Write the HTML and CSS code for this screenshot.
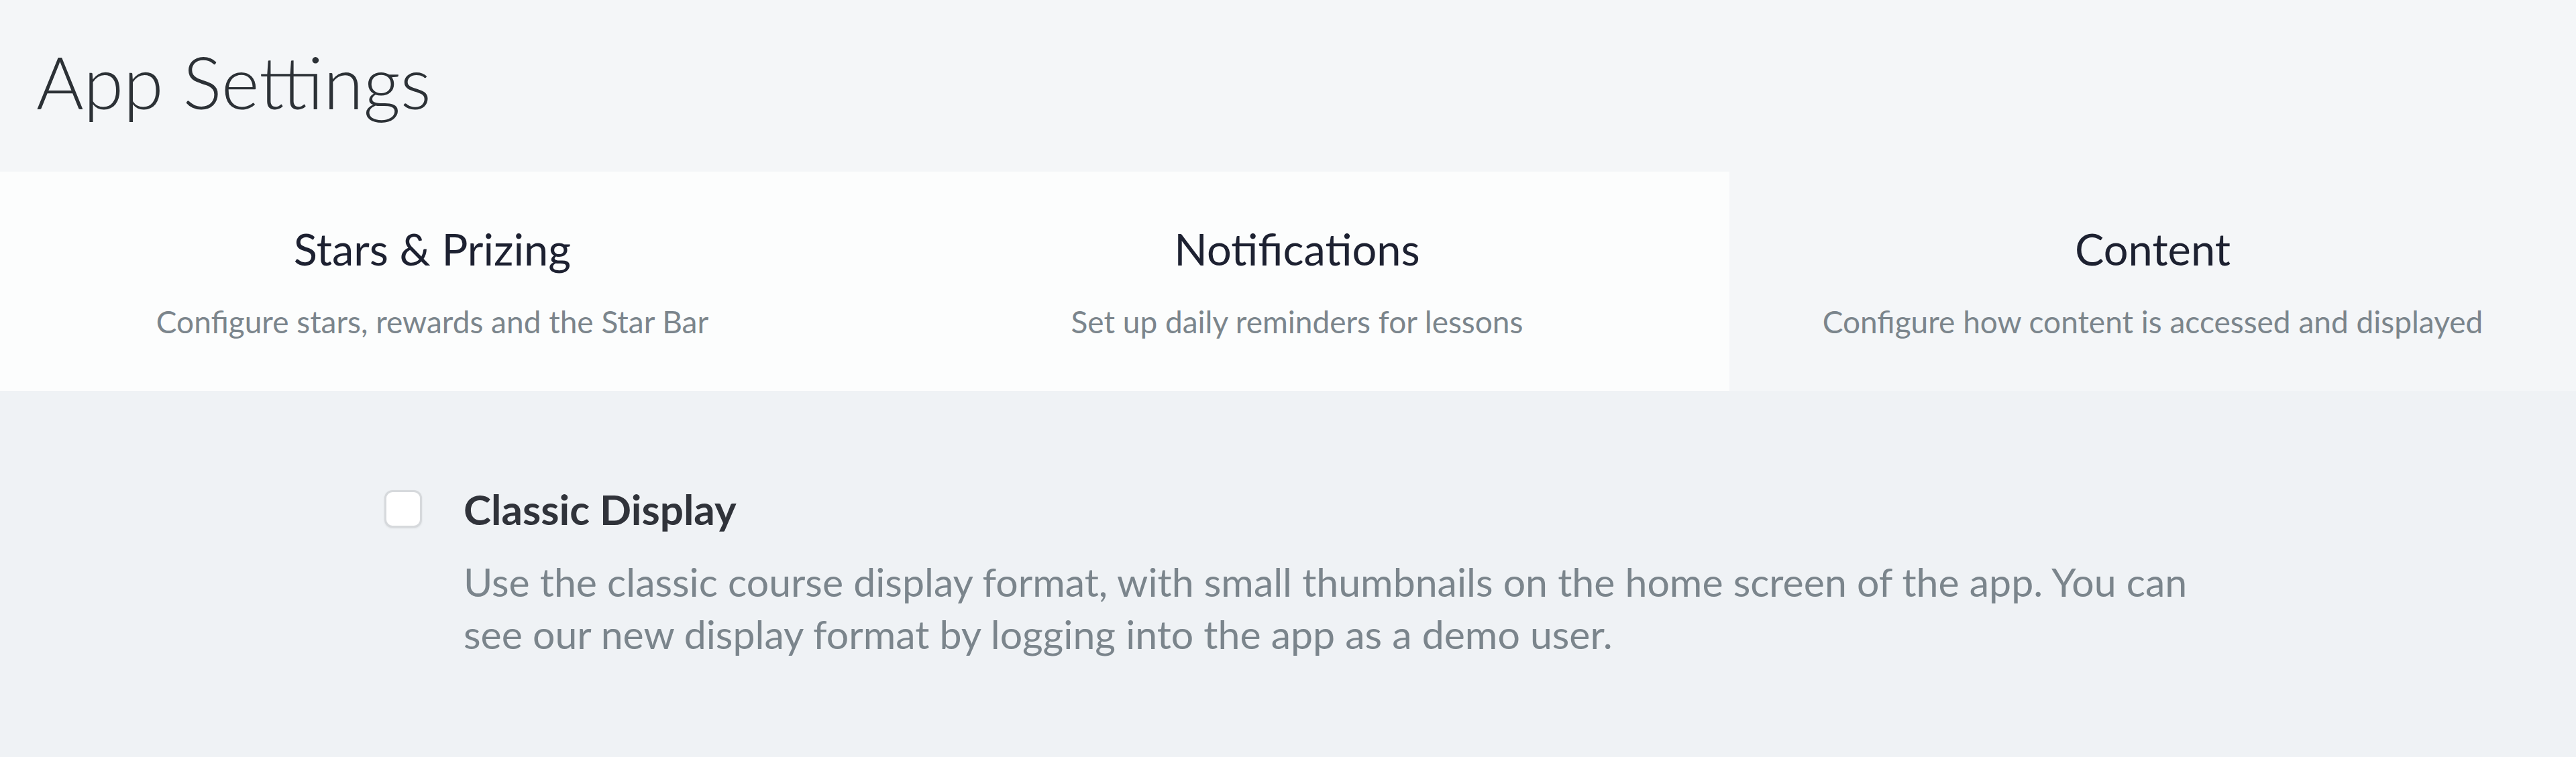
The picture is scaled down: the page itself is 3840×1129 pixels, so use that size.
FILE: index.html
```html
<!DOCTYPE html>
<html lang="en">
<head>
    <meta charset="UTF-8">
    <meta name="viewport" content="width=device-width, initial-scale=1.0">
    <title>App Settings</title>
    <link rel="stylesheet" href="styles.css">
</head>
<body>
    <div class="page-header">
        <h1>App Settings</h1>
    </div>

    <div class="tabs">
        <div class="tab">
            <p class="tab-title">Stars &amp; Prizing</p>
            <p class="tab-desc">Configure stars, rewards and the Star Bar</p>
        </div>
        <div class="tab">
            <p class="tab-title">Notifications</p>
            <p class="tab-desc">Set up daily reminders for lessons</p>
        </div>
        <div class="tab active">
            <p class="tab-title">Content</p>
            <p class="tab-desc">Configure how content is accessed and displayed</p>
        </div>
    </div>

    <div class="content">
        <div class="setting">
            <input type="checkbox" id="classicDisplay" class="setting-check">
            <div class="setting-text">
                <label for="classicDisplay" class="setting-name">Classic Display</label>
                <p class="setting-desc">Use the classic course display format, with small thumbnails on the home screen of the app. You can see our new display format by logging into the app as a demo user.</p>
            </div>
        </div>
    </div>
</body>
</html>
```

FILE: styles.css
```css
body {
    margin: 0;
    padding: 0;
    font-family: Lato, "Open Sans", sans-serif;
    background-color: #eff2f5;
    min-height: 100vh;
}

.page-header {
    background-color: #f4f6f8;
    height: 256px;
    padding-left: 54px;
    display: flex;
    align-items: center;
}

.page-header h1 {
    margin: 0;
    font-size: 108px;
    font-weight: 300;
    color: #2c3136;
    padding-bottom: 14px;
}

.tabs {
    display: grid;
    grid-template-columns: 1289px 1289px 1fr;
    height: 327px;
}

.tab {
    background-color: #fcfdfd;
    display: flex;
    flex-direction: column;
    align-items: center;
    justify-content: center;
    text-align: center;
}

.tab.active {
    background-color: #f4f6f8;
}

.tab-title {
    margin: 0;
    font-size: 65px;
    color: #1d2131;
}

.tab-desc {
    margin: 42px 0 0;
    font-size: 46px;
    color: #7b858c;
}

.content {
    padding: 148px 0 0 573px;
}

.setting {
    display: flex;
    align-items: flex-start;
}

.setting-check {
    appearance: none;
    -webkit-appearance: none;
    width: 56px;
    height: 56px;
    margin: 0 62px 0 0;
    background-color: #fff;
    border: 3px solid #d6d9dc;
    border-radius: 12px;
    box-shadow: 0 1px 3px rgba(0, 0, 0, 0.08);
    box-sizing: border-box;
}

.setting-name {
    display: block;
    font-size: 62px;
    font-weight: 700;
    color: #30333a;
    line-height: 56px;
}

.setting-desc {
    margin: 42px 0 0;
    max-width: 2620px;
    font-size: 59px;
    line-height: 78px;
    color: #7b858c;
}
```
